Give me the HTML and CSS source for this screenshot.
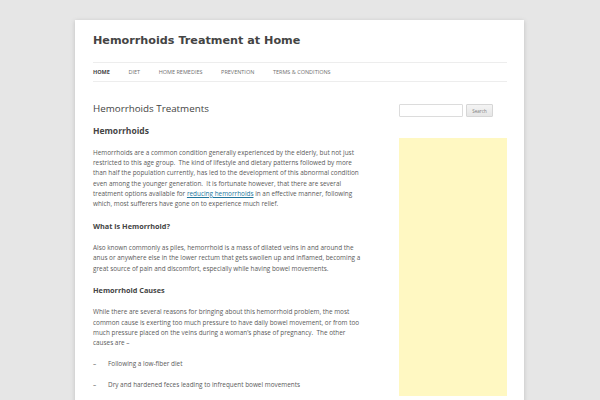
FILE: index.html
```html
<!DOCTYPE html>
<html lang="en">
<head>
<meta charset="utf-8">
<title>Hemorrhoids Treatment at Home</title>
<link rel="stylesheet" href="styles.css">
</head>
<body>
<div class="site">
  <header class="site-header">
    <h1 class="site-title">Hemorrhoids Treatment at Home</h1>
    <nav class="main-nav">
      <a class="current" href="#">HOME</a>
      <a href="#">DIET</a>
      <a href="#">HOME REMEDIES</a>
      <a href="#">PREVENTION</a>
      <a href="#">TERMS &amp; CONDITIONS</a>
    </nav>
  </header>
  <div class="main">
    <article class="content">
      <h1 class="entry-title">Hemorrhoids Treatments</h1>
      <h2 class="h-big">Hemorrhoids</h2>
      <p>Hemorrhoids are a common condition generally experienced by the elderly, but not just restricted to this age group.&nbsp; The kind of lifestyle and dietary patterns followed by more than half the population currently, has led to the development of this abnormal condition even among the younger generation.&nbsp; It is fortunate however, that there are several treatment options available for <a href="#">reducing hemorrhoids</a> in an effective manner, following which, most sufferers have gone on to experience much relief.</p>
      <h3 class="h-small">What is Hemorrhoid?</h3>
      <p>Also known commonly as piles, hemorrhoid is a mass of dilated veins in and around the anus or anywhere else in the lower rectum that gets swollen up and inflamed, becoming a great source of pain and discomfort, especially while having bowel movements.</p>
      <h3 class="h-small">Hemorrhoid Causes</h3>
      <p>While there are several reasons for bringing about this hemorrhoid problem, the most common cause is exerting too much pressure to have daily bowel movement, or from too much pressure placed on the veins during a woman’s phase of pregnancy.&nbsp; The other causes are –</p>
      <p class="dash"><span class="mark">–</span>Following a low-fiber diet</p>
      <p class="dash"><span class="mark">–</span>Dry and hardened feces leading to infrequent bowel movements</p>
    </article>
    <aside class="sidebar">
      <form class="search">
        <input class="search-input" type="text">
        <button class="search-btn" type="button">Search</button>
      </form>
      <div class="ad"></div>
    </aside>
  </div>
</div>
</body>
</html>
```
FILE: styles.css
```css
html, body {
  margin: 0;
  padding: 0;
}
body {
  background: #e6e6e6;
  font-family: "Open Sans", "Liberation Sans", sans-serif;
  color: #444;
  overflow: hidden;
}
.site {
  width: 414px;
  margin: 20px 0 0 75px;
  padding: 0 17px 0 18px;
  background: #fff;
  box-shadow: 0 1px 4px rgba(100, 100, 100, 0.3);
  height: 400px;
}
.site-header {
  padding-top: 13px;
}
.site-title {
  margin: 0;
  font-family: "DejaVu Sans", sans-serif;
  font-weight: bold;
  font-size: 11.2px;
  line-height: 16px;
  color: #444;
}
.main-nav {
  margin-top: 13px;
  border-top: 1px solid #ededed;
  border-bottom: 1px solid #ededed;
  display: flex;
  gap: 18.6px;
  line-height: 18px;
  font-size: 5.5px;
}
.main-nav a {
  color: #707070;
  text-decoration: none;
}
.main-nav a.current {
  color: #444;
  font-weight: bold;
}
.main {
  display: flex;
  justify-content: space-between;
}
.content {
  width: 270px;
  padding-top: 20px;
}
.entry-title {
  margin: 0 0 9px;
  font-weight: normal;
  font-size: 9.8px;
  line-height: 14px;
  color: #444;
}
.h-big {
  margin: 0 0 10.5px;
  font-weight: bold;
  font-size: 8.5px;
  line-height: 12px;
  color: #444;
}
.h-small {
  margin: 0 0 10px;
  font-weight: bold;
  font-size: 7.3px;
  line-height: 13px;
  color: #444;
}
.content p {
  margin: 0 0 10.35px;
  font-size: 6.4px;
  line-height: 10.35px;
  color: #5a5a5a;
}
.content p a {
  color: #21759b;
}
.dash .mark {
  display: inline-block;
  width: 15px;
}
.sidebar {
  width: 108px;
  padding-top: 21px;
}
.search {
  display: flex;
  align-items: center;
  gap: 3px;
  height: 14px;
}
.search-input {
  box-sizing: border-box;
  width: 64px;
  height: 13px;
  margin: 0;
  padding: 0;
  border: 1px solid #dcdcdc;
  border-radius: 1px;
  background: #fff;
}
.search-btn {
  box-sizing: border-box;
  width: 27px;
  height: 13px;
  margin: 1px 0 0;
  padding: 0;
  border: 1px solid #d6d6d6;
  border-radius: 1px;
  background: linear-gradient(#f4f4f4, #e6e6e6);
  font-family: "Open Sans", sans-serif;
  font-size: 4.6px;
  color: #7c7c7c;
}
.ad {
  margin-top: 21px;
  height: 258px;
  background: #fff8c2;
}
```
